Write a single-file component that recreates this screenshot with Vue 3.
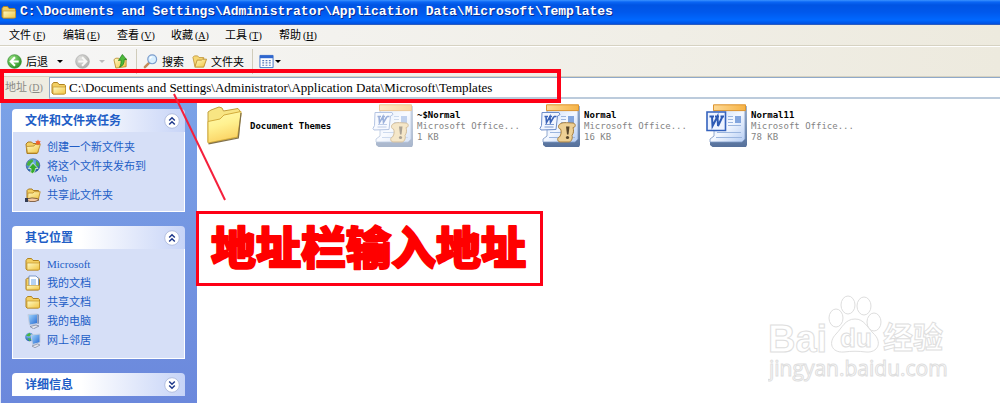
<script setup>
import { ref } from 'vue'

const path = ref('C:\\Documents and Settings\\Administrator\\Application Data\\Microsoft\\Templates')

const menus = [
  { name: '文件', key: 'F' },
  { name: '编辑', key: 'E' },
  { name: '查看', key: 'V' },
  { name: '收藏', key: 'A' },
  { name: '工具', key: 'T' },
  { name: '帮助', key: 'H' },
]

const panels = ref([
  {
    title: '文件和文件夹任务',
    open: true,
    cls: 'tasks',
    links: [
      { icon: 'new-folder', text: '创建一个新文件夹' },
      { icon: 'publish', text: '将这个文件夹发布到 Web' },
      { icon: 'share', text: '共享此文件夹' },
    ],
  },
  {
    title: '其它位置',
    open: true,
    cls: 'places',
    links: [
      { icon: 'folder', text: 'Microsoft' },
      { icon: 'documents', text: '我的文档' },
      { icon: 'folder', text: '共享文档' },
      { icon: 'computer', text: '我的电脑' },
      { icon: 'network', text: '网上邻居' },
    ],
  },
  { title: '详细信息', open: false, cls: 'details', links: [] },
])

const files = [
  { icon: 'big-folder', name: 'Document Themes' },
  { icon: 'word-macro', name: '~$Normal', type: 'Microsoft Office...', size: '1 KB', hidden: true },
  { icon: 'word-macro', name: 'Normal', type: 'Microsoft Office...', size: '16 KB' },
  { icon: 'word-template', name: 'Normal11', type: 'Microsoft Office...', size: '78 KB' },
]
</script>

<template>
  <div class="window">
    <!-- icon sprite -->
    <svg class="sprite" aria-hidden="true">
      <defs>
        <linearGradient id="yellow" x1="0" y1="0" x2="1" y2="1">
          <stop offset="0" stop-color="#fffbc4" />
          <stop offset="1" stop-color="#f0c340" />
        </linearGradient>
        <linearGradient id="folder-front" x1="0" y1="0" x2=".3" y2="1">
          <stop offset="0" stop-color="#fffbb0" />
          <stop offset=".5" stop-color="#fff190" />
          <stop offset="1" stop-color="#fbd364" />
        </linearGradient>
        <linearGradient id="orange" x1="0" y1="0" x2="1" y2="0">
          <stop offset="0" stop-color="#fdd995" />
          <stop offset="1" stop-color="#f6b345" />
        </linearGradient>
        <linearGradient id="paper" x1="0" y1="0" x2="1" y2="1">
          <stop offset="0" stop-color="#c3d8fa" />
          <stop offset=".5" stop-color="#f4f8ff" />
          <stop offset="1" stop-color="#b4ccf3" />
        </linearGradient>
        <linearGradient id="pad" x1="0" y1="0" x2="0" y2="1">
          <stop offset="0" stop-color="#9fb4d0" />
          <stop offset="1" stop-color="#55709b" />
        </linearGradient>
        <radialGradient id="green" cx=".35" cy=".3" r=".8">
          <stop offset="0" stop-color="#9be383" />
          <stop offset="1" stop-color="#218a1e" />
        </radialGradient>
        <radialGradient id="gray" cx=".35" cy=".3" r=".8">
          <stop offset="0" stop-color="#e2e2e0" />
          <stop offset="1" stop-color="#a9a9a6" />
        </radialGradient>
        <radialGradient id="globe" cx=".4" cy=".3" r=".8">
          <stop offset="0" stop-color="#8fc9ff" />
          <stop offset="1" stop-color="#124c9e" />
        </radialGradient>
        <linearGradient id="screen" x1="0" y1="0" x2="1" y2="1">
          <stop offset="0" stop-color="#a9dcff" />
          <stop offset="1" stop-color="#2166d2" />
        </linearGradient>
      </defs>

      <symbol id="folder" viewBox="0 0 16 16">
        <path d="M1 4.5 2.5 2.5h4L8 4.5h5.5l1 1.2V13l-1 1H2l-1-1z" fill="#f3cf62" stroke="#b08422" />
        <path d="M2 7h12.5v6.2l-.8.8H2z" fill="url(#yellow)" stroke="#c2942c" stroke-width=".7" />
      </symbol>
      <symbol id="open-folder" viewBox="0 0 16 16">
        <path d="M1 3.5 2.5 2H6l1.5 1.8h5V13H3z" fill="#f6d774" stroke="#c19436" stroke-width=".9" />
        <path d="M5.5 6.5H10l1.2-1h4.3L12.5 14H3z" fill="url(#yellow)" stroke="#b98929" stroke-width=".9" />
      </symbol>
      <symbol id="new-folder" viewBox="0 0 16 16">
        <path d="M1 5 3 3h3.5L8 4.5h5V13l-1 1.5H2z" fill="#f3cf62" stroke="#a77a22" />
        <path d="M1.5 7.5 9 7l1-1.5h5.3L12.5 14H2.5z" fill="url(#yellow)" stroke="#b98929" stroke-width=".8" />
        <path d="m13 .5.8 1.8 1.9-.4-.9 1.7.9 1.6-1.9-.3L13 6.6l-.8-1.7-1.9.3.9-1.6-.9-1.7 1.9.4z" fill="#f0622c" />
      </symbol>
      <symbol id="publish" viewBox="0 0 16 16">
        <circle cx="8" cy="7.5" r="6.8" fill="url(#globe)" stroke="#2c548c" stroke-width=".6" />
        <path d="M3 3.5 7 1.3 8.5 3 6 5.5 4 8 1.6 7zM11 2.5l3 3-.2 3.2-2.6-1.5z" fill="#47b13c" />
        <path d="M8 5.2 13 10.5h-2.6c0 2-.8 3.7-2.7 5l-2.5-1.2C6.3 13 6 12 6 10.5H3.3z" fill="#35a92c" stroke="#dff5d8" stroke-width=".8" />
      </symbol>
      <symbol id="share" viewBox="0 0 16 16">
        <path d="M2 3.5 3.5 2H7l1.2 1.500h5.300V12H2z" fill="#f3cf62" stroke="#a77a22" />
        <path d="M3 6h5l1.200-1.300h6L13.500 12H2.500z" fill="url(#yellow)" stroke="#b98929" stroke-width=".8" />
        <path d="M1 11.500h3l3-.6 5 .6 2 1.500-4 1.500H5l-1-.5H1z" fill="#f4c9a0" stroke="#6b4a2c" stroke-width=".8" />
        <path d="M0 11h3v4H0z" fill="#333c55" />
      </symbol>
      <symbol id="documents" viewBox="0 0 16 16">
        <path d="M1 4.500 2.500 3h11l1 1.500V14l-1 1H1.500L1 14z" fill="#f3cf62" stroke="#a77a22" />
        <path d="M4 1h7l2.500 2.500V12H4z" fill="#fff" stroke="#5f83bd" stroke-width=".8" />
        <path d="M6 5h5M6 7h5M6 9h5" stroke="#6ba4e8" />
        <path d="M1.500 10.500h13V14l-1 .8h-12z" fill="url(#yellow)" stroke="#c2942c" stroke-width=".6" />
      </symbol>
      <symbol id="computer" viewBox="0 0 16 16">
        <path d="M3 1.500 12.500 1v9.500L4.500 12z" fill="url(#screen)" stroke="#c3cde0" />
        <path d="m12.500 1 1.300.8v9l-1.300-.3z" fill="#6c7fa6" />
        <path d="M5 13.500 11 12l3 1-5.500 2.800z" fill="#e5e6ed" stroke="#7b86a1" stroke-width=".8" />
      </symbol>
      <symbol id="network" viewBox="0 0 16 16">
        <circle cx="4.500" cy="5" r="4.300" fill="url(#globe)" />
        <path d="M1 3.500 4.500.8 6 3 4 4.500zM2.500 6l4 1-2 2.300z" fill="#48b53e" />
        <path d="M6 3 15 2v8.500L7.500 12.500z" fill="url(#screen)" stroke="#c3cde0" />
        <path d="m7 14 5.500-2 2.500 1-5 2.700z" fill="#e5e6ed" stroke="#7b86a1" stroke-width=".7" />
      </symbol>
      <symbol id="back" viewBox="0 0 16 16">
        <circle cx="8" cy="8" r="7.300" fill="url(#green)" stroke="#2f8a2a" stroke-width=".7" />
        <path d="M8.500 3.500 4 8l4.500 4.500M4.500 8h8" fill="none" stroke="#fff" stroke-width="2.200" />
      </symbol>
      <symbol id="forward" viewBox="0 0 16 16">
        <circle cx="8" cy="8" r="7.300" fill="url(#gray)" stroke="#aaa" stroke-width=".7" />
        <path d="M7.500 3.500 12 8l-4.500 4.500M11.500 8h-8" fill="none" stroke="#f8f8f6" stroke-width="2.200" />
      </symbol>
      <symbol id="up" viewBox="0 0 16 16">
        <path d="M1 6 3 4.500h3L7.500 6 14 5v8.500L3 15z" fill="url(#yellow)" stroke="#b98929" stroke-width=".9" />
        <path d="M10 .5 14.500 6H12c.2 4-1.500 6.800-5 8 1.500-2.500 1.800-5 1.500-7.500L5.800 7z" fill="#4dbb3b" stroke="#237f1e" stroke-width=".8" />
      </symbol>
      <symbol id="search" viewBox="0 0 16 16">
        <path d="M6.500 9.500 2 14" stroke="#c28c5a" stroke-width="2.600" stroke-linecap="round" />
        <circle cx="9.800" cy="5.700" r="4.700" fill="#d8efff" stroke="#7c9dcc" stroke-width="1.300" />
        <path d="M7.500 5a2.500 2.500 0 0 1 2.500-2" fill="none" stroke="#fff" stroke-width="1.300" />
      </symbol>
      <symbol id="views" viewBox="0 0 16 16">
        <path d="M1 1.500h14v13H1z" fill="#fff" stroke="#3c6fc4" />
        <path d="M1 1.500h14v3H1z" fill="#2f66cf" />
        <path d="M3.500 7h2M7 7h2M10.500 7h2M3.500 9.500h2M7 9.500h2M10.500 9.500h2M3.500 12h2M7 12h2M10.500 12h2" stroke="#5578b8" stroke-width="1.300" />
      </symbol>

      <symbol id="big-folder" viewBox="0 0 42 44">
        <path d="M3 8 6 6l8-3 3 1 1.500 3L33 4.500l2 2.500-1.500 26L5 39l-2-1z" fill="#f8e583" stroke="#c2a03c" />
        <path d="M3 17.500 15 15l4-4 17-3.500v3L32.500 33 3 39z" fill="url(#folder-front)" stroke="#d3ac3c" />
        <path d="M3.500 39.800 33.300 34 36 9" fill="none" stroke="#80704a" stroke-width="1.200" />
      </symbol>
      <symbol id="pad-base" viewBox="0 0 42 44">
        <path d="M4 36v5l2.500 2H40l1-2V2h-3z" fill="url(#pad)" />
        <path d="M8 6h31v29l-3 3H4v-3l4-3z" fill="url(#paper)" stroke="#7c97c4" stroke-width=".8" />
        <path d="M7.500 .8h32v5.800h-32z" fill="url(#orange)" stroke="#dd9530" />
        <path d="M22 12.500h5M22 15.500h5M22 18.500h5M22 21.500h13M11 28.500h24M10 33.500h26" stroke="#9cb6df" />
        <path d="M29 12h6v7h-6z" fill="#82a5de" />
      </symbol>
      <symbol id="word-template" viewBox="0 0 42 44">
        <use href="#pad-base" />
        <path d="M1 8h18.500v18.500H1z" fill="#edf3ff" stroke="#3462bd" stroke-width="1.600" />
        <path d="M3.500 12.500H8M9 12.500h4M14.500 12.500H18M6 12.500l.5 9.500 5-9.500.5 9.500 4.500-9.500" fill="none" stroke="#2d5ab4" stroke-width="2" />
      </symbol>
      <symbol id="word-macro" viewBox="0 0 42 44">
        <use href="#pad-base" />
        <path d="M3 8.500h17l1 2-2.500 1.500L17 25.500l-15 .5-1-1.500 1.500-3z" fill="#f2f6ff" stroke="#6d8dc9" />
        <path d="M5.500 12.500H9M10 12.500h3M15 12.500h2.500M7 12.500l.5 6 3.500-6 .5 6 3.500-6" fill="none" stroke="#3a63b8" stroke-width="1.600" />
        <path d="M6 20.500h9M5.500 23h9" stroke="#7f9cd2" />
        <path d="M22 19.500c2-1.500 9-.5 12-.5 3 .5 3 4.500 0 4.500 1 3 .5 6-1 8 1 3-1 6.500-3 6.500h-9c-3-.5-3-4.500-.5-5 2-2.500 2-6 1-8-2.500 0-3-4.500.5-5.500z" fill="#edd095" stroke="#a87f3d" />
        <path d="M27 22.500h3.500l-1 8H28z" fill="#57452a" />
        <circle cx="28.500" cy="33.500" r="1.600" fill="#57452a" />
      </symbol>
    </svg>

    <header class="title-bar">
      <svg class="icon"><use href="#folder" /></svg>
      <h1>{{ path }}</h1>
    </header>

    <nav class="menu-bar">
      <button v-for="m in menus" :key="m.key" type="button">
        {{ m.name }}<span class="hotkey">(<u>{{ m.key }}</u>)</span>
      </button>
    </nav>

    <div class="toolbar">
      <button type="button" class="back"><svg class="icon"><use href="#back" /></svg>后退<i class="caret"></i></button>
      <button type="button" class="forward" aria-label="前进"><svg class="icon"><use href="#forward" /></svg><i class="caret off"></i></button>
      <button type="button" aria-label="向上"><svg class="icon"><use href="#up" /></svg></button>
      <span class="divider"></span>
      <button type="button"><svg class="icon"><use href="#search" /></svg>搜索</button>
      <button type="button"><svg class="icon"><use href="#open-folder" /></svg>文件夹</button>
      <span class="divider"></span>
      <button type="button" class="views" aria-label="查看方式"><svg class="icon"><use href="#views" /></svg><i class="caret"></i></button>
    </div>

    <div class="address-bar">
      <label for="address">地址<span class="hotkey">(<u>D</u>)</span></label>
      <div class="address-field">
        <svg class="icon"><use href="#folder" /></svg>
        <input id="address" v-model="path" type="text" spellcheck="false">
      </div>
    </div>

    <div class="content">
      <aside class="sidebar">
        <section v-for="p in panels" :key="p.title" class="panel" :class="p.cls">
          <button type="button" class="panel-head" @click="p.open = !p.open">
            {{ p.title }}
            <svg class="chevron" :class="{ down: !p.open }" viewBox="0 0 16 16">
              <circle cx="8" cy="8" r="7.300" fill="#fff" stroke="#b3bfe0" />
              <path d="M5.200 7.500 8 4.800l2.800 2.700M5.200 11.500 8 8.800l2.800 2.700" fill="none" stroke="#203a8c" stroke-width="1.500" />
            </svg>
          </button>
          <ul v-if="p.open && p.links.length">
            <li v-for="l in p.links" :key="l.text">
              <svg class="icon"><use :href="'#' + l.icon" /></svg>
              <a href="#">{{ l.text }}</a>
            </li>
          </ul>
        </section>
      </aside>

      <main class="files">
        <button v-for="f in files" :key="f.name" type="button" class="file" :class="{ hidden: f.hidden }">
          <svg class="file-icon"><use :href="'#' + f.icon" /></svg>
          <span class="file-text">
            <strong>{{ f.name }}</strong>
            <span v-if="f.type">{{ f.type }}</span>
            <span v-if="f.size">{{ f.size }}</span>
          </span>
        </button>
      </main>
    </div>

    <div class="address-mark"></div>
    <svg class="pointer" viewBox="0 0 54 110"><path d="M1 1 52 107" stroke="#f5203c" stroke-width="2" /></svg>
    <div class="callout">
      <svg viewBox="0 0 341 69"><text x="12" y="51">地址栏输入地址</text></svg>
    </div>

    <svg class="watermark" viewBox="0 0 182 92">
      <g class="mark">
        <text x="0" y="57" class="bai">Bai</text>
        <ellipse cx="68" cy="23" rx="7" ry="9" />
        <ellipse cx="80" cy="10" rx="7" ry="9" />
        <ellipse cx="96" cy="11" rx="7" ry="9" />
        <ellipse cx="106" cy="27" rx="7" ry="9" />
        <path d="M87 24c9 0 12 8 18 14 10 9 5 20-7 19-8-1-14-1-22 0-13 1-16-10-8-18 6-6 9-15 19-15z" />
        <text x="72" y="52" class="du">du</text>
        <text x="115" y="53" class="jy">经验</text>
        <text x="1" y="81" class="url">jingyan.baidu.com</text>
      </g>
    </svg>
  </div>
</template>

<style>
body {
  margin: 0;
}
</style>

<style scoped>
.window {
  position: relative;
  display: flex;
  flex-direction: column;
  min-height: 100vh;
  overflow: hidden;
  background: #fff;
  font: 12px/12px "Liberation Serif", "Noto Sans CJK SC", serif;
}

button {
  margin: 0;
  padding: 0;
  border: 0;
  background: none;
  color: inherit;
  font: inherit;
  text-align: left;
  white-space: nowrap;
}

.sprite {
  position: absolute;
  width: 0;
  height: 0;
}

.icon {
  flex: none;
  width: 16px;
  height: 16px;
}

.title-bar {
  display: flex;
  align-items: center;
  gap: 3px;
  box-sizing: border-box;
  height: 25px;
  padding-left: 1px;
  border-bottom: 1px solid #2a5cc0;
  background: linear-gradient(#3b93ff 0, #0a66f5 2px, #0054e3 5px, #0058ec 12px, #0068ff 20px, #0050e0 24px);
}

.title-bar h1 {
  margin: 0;
  color: #fff;
  font: bold 13px/20px "Liberation Mono", monospace;
  text-shadow: 1px 1px #0a2a8c;
  white-space: nowrap;
}

.menu-bar,
.toolbar {
  display: flex;
  align-items: center;
  background: linear-gradient(90deg, #f6f6f6, #edeade);
  font-size: 11px;
}

.menu-bar {
  height: 20px;
  padding-left: 9px;
  border-bottom: 1px solid #d6d2c2;
}

.menu-bar button {
  width: 54px;
}

.hotkey {
  padding-left: 2px;
  font-size: 10px;
}

.toolbar {
  box-sizing: border-box;
  height: 31px;
  padding-left: 7px;
  border-top: 1px solid #fff;
  border-bottom: 1px solid #d6d2c2;
}

.toolbar button {
  display: flex;
  align-items: center;
  gap: 4px;
  margin-right: 8px;
}

.toolbar .icon {
  width: 15px;
  height: 15px;
}

.toolbar .back {
  margin-right: 12px;
}

.caret {
  margin-left: 5px;
  border: 3px solid transparent;
  border-top-color: #000;
  border-bottom: 0;
}

.caret.off {
  border-top-color: #bbb;
}

.toolbar .views .caret {
  margin-left: -3px;
}

.divider {
  align-self: stretch;
  margin: 2px 6px 2px 0;
  border-left: 1px solid #d0ccba;
}

.address-bar {
  display: flex;
  height: 22px;
  background: #eeece1;
}

.address-bar label {
  width: 44px;
  padding-left: 5px;
  color: #8a8a84;
  font-size: 11px;
  line-height: 20px;
  white-space: nowrap;
}

.address-field {
  display: flex;
  flex: 1;
  align-items: center;
  gap: 2px;
  padding-left: 1px;
  border: 1px solid #90a9c8;
  border-right: 0;
  border-bottom: 2px solid #bccbdc;
  background: #fff;
}

.address-field input {
  flex: 1;
  min-width: 0;
  padding: 0;
  border: 0;
  outline: 0;
  background: none;
  color: #000;
  font: 13px/16px "Liberation Serif", serif;
}

.content {
  display: flex;
  flex: 1;
}

.sidebar {
  display: flex;
  flex-direction: column;
  gap: 14px;
  box-sizing: border-box;
  width: 197px;
  padding: 10px 12px 6px 11px;
  border-left: 1px solid #dfe6f8;
  background: linear-gradient(#7ba2e7, #6b88dc);
}

.panel-head {
  display: flex;
  align-items: center;
  justify-content: space-between;
  box-sizing: border-box;
  width: 100%;
  height: 23px;
  padding: 0 5px 0 13px;
  border-radius: 4px 4px 0 0;
  background: linear-gradient(90deg, #fff 40%, #c7d4f7);
  color: #215dc6;
  font-size: 12px;
  font-weight: bold;
}

.chevron {
  width: 16px;
  height: 16px;
}

.chevron.down {
  transform: rotate(180deg);
}

.panel ul {
  display: flex;
  flex-direction: column;
  gap: 3px;
  box-sizing: border-box;
  margin: 0;
  padding: 7px 24px 7px 12px;
  border: 1px solid #fff;
  border-top: 0;
  background: #d6dff7;
  list-style: none;
}

.tasks ul {
  min-height: 80px;
}

.places ul {
  min-height: 110px;
}

.panel li {
  display: flex;
  gap: 6px;
}

.panel a {
  padding-top: 2px;
  color: #215dc6;
  font: 11px/12px "Liberation Serif", "Noto Sans CJK SC", serif;
  text-decoration: none;
}

.files {
  display: grid;
  flex: 1;
  grid-template-columns: repeat(auto-fill, 167px);
  align-content: start;
  padding: 5px 8px;
}

.file {
  display: flex;
  align-items: center;
  gap: 3px;
}

.file-icon {
  flex: none;
  width: 42px;
  height: 44px;
}

.file-text {
  display: flex;
  flex-direction: column;
  color: #848484;
  font: 9px/11px "DejaVu Sans Mono", monospace;
}

.file-text strong {
  color: #000;
}

.hidden .file-icon {
  opacity: .5;
}

.address-mark {
  position: absolute;
  top: 69px;
  left: 0;
  box-sizing: border-box;
  width: 561px;
  height: 34px;
  border: 4px solid #fe0016;
  pointer-events: none;
}

.pointer {
  position: absolute;
  top: 93px;
  left: 173px;
  width: 54px;
  height: 110px;
  pointer-events: none;
}

.callout {
  position: absolute;
  top: 211px;
  left: 196px;
  border: 3px solid #fe0016;
}

.callout svg {
  display: block;
  width: 341px;
  height: 69px;
  overflow: visible;
}

.callout text {
  fill: #f00;
  stroke: #f00;
  stroke-width: 2;
  stroke-linejoin: round;
  font: 900 45px "Noto Sans CJK SC", sans-serif;
}

.watermark {
  position: absolute;
  right: 50px;
  bottom: 16px;
  width: 182px;
  height: 92px;
  pointer-events: none;
}

.mark {
  fill: #fff;
  stroke: #dedede;
  stroke-width: 1;
}

.bai {
  font: bold 38px "Liberation Sans", sans-serif;
}

.du {
  font: bold 26px "Liberation Sans", sans-serif;
}

.jy {
  font: bold 30px "Noto Sans CJK SC", sans-serif;
}

.url {
  font: 21px "Open Sans", sans-serif;
}
</style>
